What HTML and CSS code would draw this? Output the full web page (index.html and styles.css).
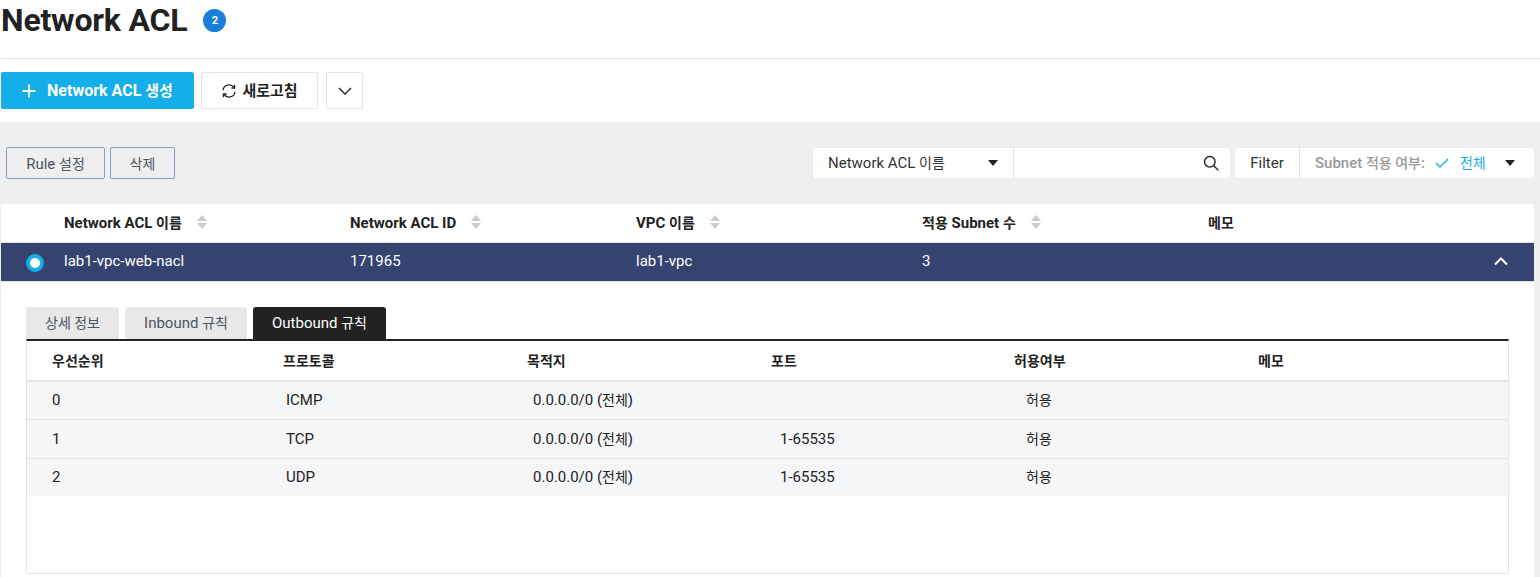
FILE: index.html
```html
<!DOCTYPE html>
<html lang="ko">
<head>
    <meta charset="UTF-8">
    <meta name="viewport" content="width=device-width, initial-scale=1.0">
    <title>Network ACL</title>
    <link rel="stylesheet" href="styles.css">
</head>
<body>
    <header class="page-head">
        <h1>Network ACL</h1>
        <span class="count-badge">2</span>
    </header>

    <div class="action-bar">
        <button class="btn btn-create">
            <svg class="icon-plus" width="14" height="14" viewBox="0 0 14 14"><path d="M7 0.5v13M0.5 7h13" fill="none" stroke="#fff" stroke-width="1.8"/></svg>
            <span>Network ACL <span class="ko">생성</span></span>
        </button>
        <button class="btn btn-refresh">
            <svg width="16" height="16" viewBox="0 0 16 16" fill="none" stroke="#222" stroke-width="1.3"><path d="M2 7.2A6 6 0 0 1 13 4.6"/><path d="M14 8.8A6 6 0 0 1 3 11.4"/><path d="M13.6 1.8v3.2h-3.2" /><path d="M2.4 14.2v-3.2h3.2"/></svg>
            <span class="ko">새로고침</span>
        </button>
        <button class="btn btn-more">
            <svg width="14" height="8" viewBox="0 0 14 8"><path d="M1 1l6 6 6-6" fill="none" stroke="#222" stroke-width="1.4"/></svg>
        </button>
    </div>

    <main class="content">
        <div class="toolbar">
            <div class="toolbar-left">
                <button class="btn-line btn-rule">Rule <span class="ko">설정</span></button>
                <button class="btn-line btn-del"><span class="ko">삭제</span></button>
            </div>
            <div class="toolbar-right">
                <div class="search-box">
                    <div class="search-select"><span>Network ACL <span class="ko">이름</span></span><span class="caret"></span></div>
                    <div class="search-input">
                        <svg width="16" height="16" viewBox="0 0 16 16" fill="none" stroke="#222" stroke-width="1.4"><circle cx="6.8" cy="6.8" r="5.3"/><path d="M10.6 10.6l4.6 4.6"/></svg>
                    </div>
                </div>
                <div class="filter-box">
                    <div class="filter-label">Filter</div>
                    <div class="filter-value">
                        <span class="filter-name">Subnet <span class="ko">적용 여부</span>:</span>
                        <svg class="icon-check" width="14" height="10" viewBox="0 0 14 10"><path d="M1 5l4 4 8-8" fill="none" stroke="#14aeea" stroke-width="1.4"/></svg>
                        <span class="filter-all ko">전체</span>
                        <span class="caret"></span>
                    </div>
                </div>
            </div>
        </div>

        <section class="card">
            <div class="list-row list-head">
                <div>Network ACL <span class="ko">이름</span><span class="sort"></span></div>
                <div>Network ACL ID<span class="sort"></span></div>
                <div>VPC <span class="ko">이름</span><span class="sort"></span></div>
                <div><span class="ko">적용</span> Subnet <span class="ko">수</span><span class="sort"></span></div>
                <div class="ko">메모</div>
            </div>
            <div class="list-row list-selected">
                <span class="radio"></span>
                <div>lab1-vpc-web-nacl</div>
                <div>171965</div>
                <div>lab1-vpc</div>
                <div>3</div>
                <div></div>
                <svg class="icon-up" width="14" height="9" viewBox="0 0 14 9"><path d="M1 7.5l6-6 6 6" fill="none" stroke="#fff" stroke-width="2"/></svg>
            </div>

            <div class="detail">
                <div class="tabs">
                    <div class="tab tab-info"><span class="ko">상세 정보</span></div>
                    <div class="tab tab-in">Inbound <span class="ko">규칙</span></div>
                    <div class="tab tab-active">Outbound <span class="ko">규칙</span></div>
                </div>
                <div class="rules">
                    <div class="rule-row rule-head">
                        <div class="ko">우선순위</div>
                        <div class="ko">프로토콜</div>
                        <div class="ko">목적지</div>
                        <div class="ko">포트</div>
                        <div class="ko">허용여부</div>
                        <div class="ko">메모</div>
                    </div>
                    <div class="rule-row rule-item">
                        <div>0</div>
                        <div>ICMP</div>
                        <div>0.0.0.0/0 (<span class="ko">전체</span>)</div>
                        <div></div>
                        <div class="ko">허용</div>
                        <div></div>
                    </div>
                    <div class="rule-row rule-item">
                        <div>1</div>
                        <div>TCP</div>
                        <div>0.0.0.0/0 (<span class="ko">전체</span>)</div>
                        <div>1-65535</div>
                        <div class="ko">허용</div>
                        <div></div>
                    </div>
                    <div class="rule-row rule-item">
                        <div>2</div>
                        <div>UDP</div>
                        <div>0.0.0.0/0 (<span class="ko">전체</span>)</div>
                        <div>1-65535</div>
                        <div class="ko">허용</div>
                        <div></div>
                    </div>
                </div>
            </div>
        </section>
    </main>
</body>
</html>
```

FILE: styles.css
```css
html, body {
    height: 577px;
    overflow: hidden;
}
body {
    margin: 0;
    background: #fff;
    color: #222;
    font-family: Roboto, "Noto Sans CJK KR", sans-serif;
    font-size: 15px;
}
button {
    font-family: inherit;
    cursor: pointer;
}
/* hangul runs a size down from the latin next to it */
.ko {
    font-size: 14px;
}
.page-head {
    display: flex;
    align-items: center;
    height: 40px;
    margin-left: 1px;
    padding-bottom: 18px;
    border-bottom: 1px solid #e3e3e3;
}
h1 {
    margin: 0;
    font-size: 32px;
    font-weight: 700;
    letter-spacing: -0.2px;
    line-height: 40px;
    color: #222;
}
.count-badge {
    display: flex;
    align-items: center;
    justify-content: center;
    width: 23px;
    height: 23px;
    margin-left: 16px;
    border-radius: 50%;
    background: #1a7fd8;
    color: #fff;
    font-size: 11px;
    font-weight: 700;
}
.action-bar {
    display: flex;
    height: 37px;
    padding: 13px 0 13px 1px;
}
.btn {
    display: flex;
    align-items: center;
    justify-content: center;
    height: 37px;
    padding: 0;
    border-radius: 2px;
    border: 1px solid #e3e3e3;
    background: #fff;
    color: #222;
    font-size: 16px;
    font-weight: 700;
    line-height: 20px;
}
.btn .ko {
    font-size: 15px;
}
.btn-create {
    width: 193px;
    gap: 11px;
    border-color: #14aeea;
    background: #14aeea;
    color: #fff;
}
.btn-refresh {
    width: 117px;
    margin-left: 7px;
    gap: 5px;
}
.btn-more {
    width: 37px;
    margin-left: 8px;
}
.content {
    height: 455px;
    background: #efefef;
    padding-left: 1px;
}
.toolbar {
    display: flex;
    justify-content: space-between;
    height: 82px;
    width: 1533px;
}
.toolbar-left {
    display: flex;
    gap: 5px;
    padding: 25px 0 0 5px;
}
.btn-line {
    height: 32px;
    padding: 0;
    border: 1px solid #86a0bd;
    border-radius: 2px;
    background: transparent;
    color: #4c5562;
    font-size: 15px;
}
.btn-rule { width: 99px; }
.btn-del { width: 65px; }
.toolbar-right {
    display: flex;
    gap: 5px;
    padding-top: 26px;
}
.search-box, .filter-box {
    display: flex;
    height: 30px;
    background: #fff;
    border-radius: 2px;
    box-shadow: 0 0 1px rgba(0, 0, 0, 0.15);
    line-height: 30px;
}
.search-box { width: 417px; }
.search-select {
    display: flex;
    align-items: center;
    justify-content: space-between;
    width: 201px;
    padding: 0 15px;
    box-sizing: border-box;
    border-right: 1px solid #e3e3e3;
    color: #333;
}
.search-input {
    flex: 1;
    display: flex;
    align-items: center;
    justify-content: flex-end;
    padding-right: 11px;
}
.caret {
    display: inline-block;
    width: 0;
    height: 0;
    border-left: 5px solid transparent;
    border-right: 5px solid transparent;
    border-top: 6px solid #222;
}
.filter-box { width: 299px; }
.filter-label {
    width: 64px;
    text-align: center;
    border-right: 1px solid #e3e3e3;
    color: #333;
}
.filter-value {
    flex: 1;
    display: flex;
    align-items: center;
    padding-left: 15px;
    color: #999;
}
.filter-name {
    white-space: nowrap;
    font-weight: 500;
}
.icon-check { margin-left: 10px; }
.filter-all {
    margin-left: 11px;
    color: #14aeea;
}
.filter-value .caret { margin-left: 19px; }
.card {
    width: 1533px;
    height: 373px;
    background: #fff;
    border-radius: 3px 3px 0 0;
}
.list-row {
    display: grid;
    grid-template-columns: 286px 286px 286px 286px 1fr;
    align-items: center;
    box-sizing: border-box;
    height: 39px;
    padding: 0 0 3px 63px;
    line-height: 20px;
}
.list-head {
    padding-bottom: 1px;
    font-weight: 700;
    border-bottom: 1px solid #e3e3e3;
}
.sort {
    display: inline-block;
    position: relative;
    width: 10px;
    height: 14px;
    margin-left: 15px;
    vertical-align: -1px;
}
.sort::before, .sort::after {
    content: "";
    position: absolute;
    left: 0;
    border-left: 5px solid transparent;
    border-right: 5px solid transparent;
}
.sort::before {
    top: 0;
    border-bottom: 6px solid #ccc;
}
.sort::after {
    bottom: 0;
    border-top: 6px solid #ccc;
}
.list-selected {
    position: relative;
    background: #364370;
    color: #fff;
    border-bottom: 1px solid #e3e3e3;
}
.radio {
    position: absolute;
    left: 25px;
    top: 11px;
    width: 18px;
    height: 18px;
    box-sizing: border-box;
    border: 4.5px solid #14aeea;
    border-radius: 50%;
    background: #fff;
}
.icon-up {
    position: absolute;
    right: 26px;
    top: 14px;
}
.detail {
    padding: 25px 25px 0;
}
.tabs {
    display: flex;
    gap: 6px;
    height: 32px;
}
.tab {
    height: 32px;
    line-height: 32px;
    text-align: center;
    background: #e8e8e8;
    color: #4c5562;
    border-radius: 3px 3px 0 0;
}
.tab-info { width: 93px; }
.tab-in { width: 122px; }
.tab-active {
    width: 133px;
    background: #222;
    color: #fff;
}
.rules {
    width: 1481px;
    height: 232px;
    border: 1px solid #e3e3e3;
    border-top: 2px solid #222;
}
.rule-row {
    display: grid;
    grid-template-columns: 231px 244px 244px 243px 244px 1fr;
    align-items: center;
    box-sizing: border-box;
    padding: 0 0 1px 25px;
    line-height: 20px;
}
.rule-head {
    height: 41px;
    padding-bottom: 0;
    font-weight: 700;
    border-bottom: 2px solid #e3e3e3;
}
.rule-item {
    height: 38px;
    background: #f5f6f8;
    border-bottom: 1px solid #e3e3e3;
}
.rule-item:nth-child(3) {
    height: 39px;
}
.rule-item:last-child {
    height: 37px;
    border-bottom: 0;
}
.rule-item div:nth-child(2) { padding-left: 3px; }
.rule-item div:nth-child(3) { padding-left: 6px; }
.rule-item div:nth-child(4) { padding-left: 9px; }
.rule-item div:nth-child(5) { padding-left: 12px; }
```
